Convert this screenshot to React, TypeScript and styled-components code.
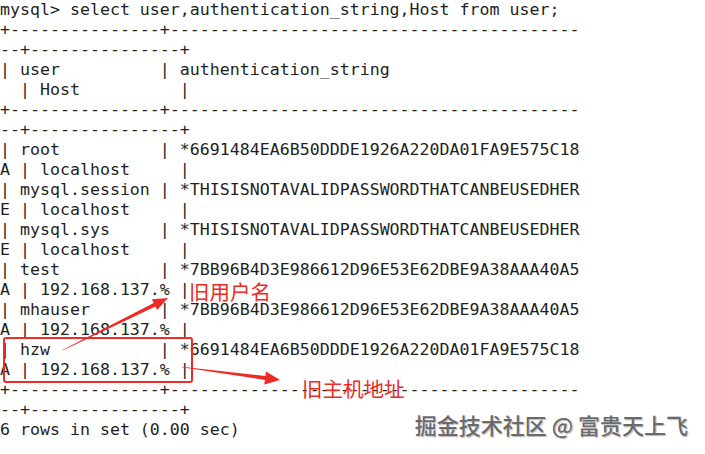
import React from "react";
import styled, { createGlobalStyle } from "styled-components";

const GlobalStyle = createGlobalStyle`
  html, body {
    margin: 0;
    padding: 0;
    background: #ffffff;
  }
  body {
    width: 705px;
    height: 454px;
    overflow: hidden;
  }
`;

const Page = styled.div`
  position: relative;
  width: 705px;
  height: 454px;
  background: #ffffff;
  overflow: hidden;
`;

const Terminal = styled.div`
  display: flex;
  flex-direction: column;
  font-family: "DejaVu Sans Mono", "Liberation Mono", monospace;
  font-size: 16.6px;
  line-height: 20px;
  color: #1f1f1f;
`;

const Line = styled.div`
  white-space: pre;
  height: 20px;
`;

const RED = "#ee2b25";

const Frame = styled.div`
  position: absolute;
  left: 3px;
  top: 337px;
  width: 186px;
  height: 42px;
  border: 2.6px solid ${RED};
  border-radius: 3px;
`;

const Overlay = styled.svg`
  position: absolute;
  left: 0;
  top: 0;
  width: 705px;
  height: 454px;
  pointer-events: none;
`;

const Label = styled.div<{ $x: number; $y: number }>`
  position: absolute;
  left: ${(p) => p.$x}px;
  top: ${(p) => p.$y}px;
  font-family: "Noto Sans CJK SC", "Noto Sans", sans-serif;
  font-size: 20.5px;
  line-height: 1;
  color: ${RED};
  white-space: nowrap;
`;

const Watermark = styled.div`
  position: absolute;
  right: 17px;
  top: 413px;
  font-family: "Noto Sans CJK SC", "Noto Sans", sans-serif;
  font-size: 22px;
  font-weight: 500;
  line-height: 1;
  color: #6a6a6a;
  white-space: nowrap;
  text-shadow: 0 0 1px #ffffff, 1px 1px 1px rgba(0, 0, 0, 0.3);
`;

const sep1 = "+" + "-".repeat(15) + "+" + "-".repeat(41);
const sep2 = "--+" + "-".repeat(15) + "+";

const lines: string[] = [
  "mysql> select user,authentication_string,Host from user;",
  sep1,
  sep2,
  "| user          | authentication_string",
  "  | Host          |",
  sep1,
  sep2,
  "| root          | *6691484EA6B50DDDE1926A220DA01FA9E575C18",
  "A | localhost     |",
  "| mysql.session | *THISISNOTAVALIDPASSWORDTHATCANBEUSEDHER",
  "E | localhost     |",
  "| mysql.sys     | *THISISNOTAVALIDPASSWORDTHATCANBEUSEDHER",
  "E | localhost     |",
  "| test          | *7BB96B4D3E986612D96E53E62DBE9A38AAA40A5",
  "A | 192.168.137.% |",
  "| mhauser       | *7BB96B4D3E986612D96E53E62DBE9A38AAA40A5",
  "A | 192.168.137.% |",
  "| hzw           | *6691484EA6B50DDDE1926A220DA01FA9E575C18",
  "A | 192.168.137.% |",
  sep1,
  sep2,
  "6 rows in set (0.00 sec)",
];

function taperedArrow(
  x1: number,
  y1: number,
  x2: number,
  y2: number,
  headLen: number,
  headHalf: number,
  tailHalf: number,
  shaftHalf: number
): string {
  const dx = x2 - x1;
  const dy = y2 - y1;
  const len = Math.hypot(dx, dy);
  const ux = dx / len;
  const uy = dy / len;
  const nx = -uy;
  const ny = ux;
  const bx = x2 - headLen * ux;
  const by = y2 - headLen * uy;
  const pts: [number, number][] = [
    [x1 + tailHalf * nx, y1 + tailHalf * ny],
    [bx + shaftHalf * nx, by + shaftHalf * ny],
    [bx + headHalf * nx, by + headHalf * ny],
    [x2, y2],
    [bx - headHalf * nx, by - headHalf * ny],
    [bx - shaftHalf * nx, by - shaftHalf * ny],
    [x1 - tailHalf * nx, y1 - tailHalf * ny],
  ];
  return pts.map(([a, b]) => `${a.toFixed(1)},${b.toFixed(1)}`).join(" ");
}

export default function App() {
  return (
    <>
      <GlobalStyle />
      <Page>
        <Terminal>
          {lines.map((l, i) => (
            <Line key={i}>{l}</Line>
          ))}
        </Terminal>
        <Frame />
        <Overlay viewBox="0 0 705 454">
          <polygon
            points={taperedArrow(63, 350, 168, 298, 15, 6, 0.3, 1.9)}
            fill={RED}
          />
          <polygon
            points={taperedArrow(182, 367, 280, 380, 15, 6.5, 0.3, 1.9)}
            fill={RED}
          />
        </Overlay>
        <Label $x={189} $y={281}>旧用户名</Label>
        <Label $x={302} $y={378}>旧主机地址</Label>
        <Watermark>掘金技术社区 @ 富贵天上飞</Watermark>
      </Page>
    </>
  );
}
